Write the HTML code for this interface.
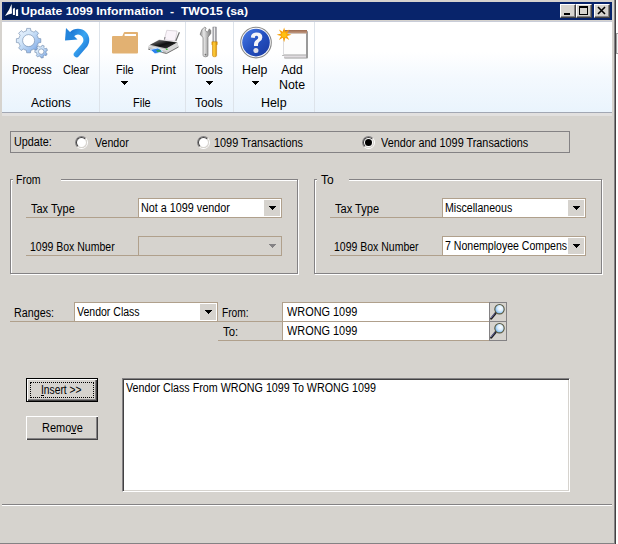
<!DOCTYPE html>
<html><head><meta charset="utf-8">
<style>
*{box-sizing:border-box}
html,body{margin:0;padding:0}
body{width:618px;height:544px;overflow:hidden;background:#fff;position:relative;font-family:"Liberation Sans",sans-serif;font-size:11px;color:#000}
.a{position:absolute}
#win{left:0;top:0;width:616px;height:544px;background:#d6d3ce;border-right:1px solid #424142}
#winr{left:614px;top:0;width:1px;height:544px;background:#848284}
#winb{left:0;top:543px;width:615px;height:1px;background:#848284}
#title{left:2px;top:2px;width:610px;height:18px;background:#08246b}
#logo{left:4px;top:3px;width:16px;height:16px;background:#011c52}
#ttxt{left:21px;top:4px;color:#fff;font-weight:bold;font-size:12px;line-height:14px;white-space:pre}
.tb{top:4px;width:16px;height:14px;background:#d6d3ce;border-top:1px solid #fff;border-left:1px solid #fff;border-right:1px solid #424142;border-bottom:1px solid #424142;box-shadow:inset -1px -1px 0 #848284}
#ribtop{left:2px;top:20px;width:610px;height:1px;background:#d6d3ce}
#ribline{left:2px;top:21px;width:610px;height:1px;background:#c8ccd8}
#ribbon{left:2px;top:22px;width:610px;height:90px;background:linear-gradient(#ffffff 0px,#ffffff 30px,#f4f9fe 55px,#eaf4fd 89px)}
#ribbot{left:2px;top:112px;width:610px;height:1px;background:#a2a7b3}
#ribbot2{left:2px;top:113px;width:610px;height:3px;background:#e2e0df}
.sep{top:22px;width:1px;height:90px;background:#dde3ea}
.rl{font-size:12px;line-height:14px;white-space:nowrap;color:#000}
.arr{width:0;height:0;border-left:3.5px solid transparent;border-right:3.5px solid transparent;border-top:4px solid #000}
.grp{border:1px solid #848284;box-shadow:1px 1px 0 #fff, inset 1px 1px 0 #fff}
.ul{height:1px;background:#b0a08c}
.cb{background:#fff;border:1px solid #b0a08c}
.cbb{background:#d6d3ce}
.cbarr{width:0;height:0;border-left:3.5px solid transparent;border-right:3.5px solid transparent;border-top:4px solid #000}
.lbl{line-height:13px;white-space:nowrap}
.radio{width:13px;height:13px;border-radius:50%;border:1px solid;border-color:#848284 #fff #fff #848284}.radio i{position:absolute;left:0;top:0;width:11px;height:11px;border-radius:50%;background:#fff;border:1px solid;border-color:#424142 #d6d3ce #d6d3ce #424142}
</style></head><body>
<svg width="0" height="0" style="position:absolute"><filter id="crisp" x="-5%" y="-20%" width="110%" height="140%"><feComponentTransfer><feFuncA type="discrete" tableValues="0 1 1"/></feComponentTransfer></filter></svg>
<div id="win" class="a"></div>
<div id="winr" class="a"></div>
<div id="winb" class="a"></div>
<div class="a" style="left:616px;top:33px;width:4px;height:21px;border:1px solid #a0a0a0;background:#f4f4f4"></div>
<div id="title" class="a"></div>
<div id="logo" class="a"></div>
<svg class="a" style="left:0;top:0" width="22" height="20" viewBox="0 0 22 20">
<path d="M5 16 Q9.5 10 11.6 4 L12 13.4 Q8 14 5 16 Z" fill="#fff"/>
<path d="M12.9 8.8 L14.9 7.8 L14.9 15.1 L12.9 15.1 Z" fill="#fff"/>
<path d="M15.9 9.8 L18.1 8.9 L18.1 15.9 L15.9 15.9 Z" fill="#fff"/>
</svg>
<div class="a tb" style="left:560px"></div>
<div class="a tb" style="left:576px"></div>
<div class="a tb" style="left:594px"></div>
<div class="a" style="left:564px;top:13px;width:6px;height:2px;background:#000"></div>
<div class="a" style="left:579px;top:6px;width:9px;height:9px;border:1px solid #000;border-top-width:2px"></div>
<svg class="a" style="left:597px;top:6px" width="10" height="9" viewBox="0 0 10 9"><path d="M1 1 L8 8 M8 1 L1 8" stroke="#000" stroke-width="1.6"/></svg>

<div id="ribtop" class="a"></div>
<div id="ribline" class="a"></div>
<div id="ribbon" class="a"></div>
<div id="ribbot" class="a"></div>
<div id="ribbot2" class="a"></div>
<div class="a sep" style="left:99px"></div>
<div class="a sep" style="left:185px"></div>
<div class="a sep" style="left:233px"></div>
<div class="a sep" style="left:314px"></div>

<!-- icons -->
<svg class="a" style="left:0;top:0" width="618" height="120" viewBox="0 0 618 120">
<defs>
<linearGradient id="gg" x1="0" y1="0" x2="1" y2="1">
<stop offset="0" stop-color="#f0f6fe"/><stop offset="0.4" stop-color="#d0e4f8"/><stop offset="0.75" stop-color="#98bcec"/><stop offset="1" stop-color="#5080d0"/>
</linearGradient>
<linearGradient id="ag" x1="0" y1="0" x2="1" y2="1">
<stop offset="0" stop-color="#1f7ad6"/><stop offset="0.5" stop-color="#3aa6f2"/><stop offset="1" stop-color="#1c74d4"/>
</linearGradient>
<linearGradient id="hg" x1="0" y1="0" x2="1" y2="1">
<stop offset="0" stop-color="#4a7ce8"/><stop offset="0.5" stop-color="#2450c0"/><stop offset="1" stop-color="#1a3aa0"/>
</linearGradient>
<linearGradient id="pg" x1="0" y1="0" x2="0" y2="1">
<stop offset="0" stop-color="#9a6a50"/><stop offset="1" stop-color="#c8a088"/>
</linearGradient>
<linearGradient id="dk" x1="0" y1="0" x2="1" y2="1">
<stop offset="0" stop-color="#909090"/><stop offset="0.5" stop-color="#101010"/><stop offset="1" stop-color="#424142"/>
</linearGradient>
</defs>
<!-- gears -->
<path d="M24.8 31.4 L26.4 30.8 L26.7 28.4 L30.5 28.4 L30.8 30.8 L32.4 31.4 L34.0 32.2 L35.9 30.6 L38.6 33.3 L37.0 35.2 L37.8 36.8 L38.4 38.4 L40.8 38.7 L40.8 42.5 L38.4 42.8 L37.8 44.4 L37.0 46.0 L38.6 47.9 L35.9 50.6 L34.0 49.0 L32.4 49.8 L30.8 50.4 L30.5 52.8 L26.7 52.8 L26.4 50.4 L24.8 49.8 L23.2 49.0 L21.3 50.6 L18.6 47.9 L20.2 46.0 L19.4 44.4 L18.8 42.8 L16.4 42.5 L16.4 38.7 L18.8 38.4 L19.4 36.8 L20.2 35.2 L18.6 33.3 L21.3 30.6 L23.2 32.2 Z M28.6 34.6 A6 6 0 1 0 28.6 46.6 A6 6 0 1 0 28.6 34.6 Z" fill="url(#gg)" fill-rule="evenodd" stroke="#6a84a8" stroke-width="0.6"/>
<path d="M40.5 46.8 L41.4 46.7 L42.0 45.2 L44.2 45.9 L43.8 47.4 L44.5 48.0 L45.2 48.7 L46.6 48.2 L47.5 50.4 L46.1 51.0 L46.1 52.0 L45.9 52.9 L47.2 53.8 L46.1 55.7 L44.7 55.0 L44.0 55.7 L43.1 56.1 L43.3 57.7 L41.0 58.0 L40.7 56.5 L39.8 56.3 L38.9 55.9 L37.8 57.0 L36.1 55.4 L37.1 54.2 L36.6 53.4 L36.4 52.5 L34.8 52.3 L35.0 50.0 L36.6 50.0 L37.0 49.1 L37.5 48.4 L36.7 47.0 L38.6 45.8 L39.5 47.0 Z M41.2 48.9 A2.7 2.7 0 1 0 41.2 54.3 A2.7 2.7 0 1 0 41.2 48.9 Z" fill="url(#gg)" fill-rule="evenodd" stroke="#6a84a8" stroke-width="0.6"/>
<!-- undo arrow -->
<path d="M72.1 34.1 A8.3 8.3 0 1 1 83.9 45.9 L76.6 54.4" fill="none" stroke="url(#ag)" stroke-width="5.8" stroke-linecap="round"/>
<path d="M66 28 L65 40.5 L77.5 39.5 Z" fill="#2384dc"/>
<!-- folder -->
<path d="M112 37 Q112 36 113 36 L122.4 36 L124 32.3 Q124.2 32 125 32 L137 32 Q138 32 138 33 L138 52.5 Q138 53.5 137 53.5 L113 53.5 Q112 53.5 112 52.5 Z" fill="#e2b172"/>
<rect x="124.6" y="34" width="11.4" height="2" fill="#fff"/>
<!-- printer -->
<path d="M166.8 30.3 L177.1 31 L175.1 41.2 L164.2 39.8 Z" fill="#faf4fa" stroke="#c8c0c8" stroke-width="0.6"/>
<path d="M179.4 32.3 L175.8 41" stroke="#707070" stroke-width="1.2"/>
<path d="M164.5 39.5 L165 37" stroke="#848284" stroke-width="1"/>
<path d="M148.3 45.9 L159.2 39.6 L177.4 42.2 L178.5 47 L166.5 53.5 L148.3 49.2 Z" fill="#c4c4c4"/>
<path d="M150 44.7 L159.2 40 L177 42.6 L166.5 48.5 Z" fill="url(#dk)"/>
<path d="M166.5 48.5 L177.6 42.6 L178.5 47 L166.5 53.5 Z" fill="#d8d8d8"/>
<rect x="166" y="48.6" width="1.6" height="1.4" fill="#40c040"/>
<path d="M148.3 49.2 L166.5 53.5 L178.5 47" fill="none" stroke="#686868" stroke-width="0.9"/>
<path d="M148.3 46.2 L166.5 50.4" fill="none" stroke="#ffffff" stroke-width="0.6"/>
<path d="M150.3 49.6 L158 48 L163 51.5 L155 53.8 Z" fill="#2a80f0" stroke="#e0f0ff" stroke-width="0.8"/>
<path d="M156 50 L160 49.5 L161.5 51.5 L157.5 52.3 Z" fill="#30a060"/>
<!-- tools -->
<defs>
<linearGradient id="wr" x1="0" y1="0" x2="1" y2="0"><stop offset="0" stop-color="#909090"/><stop offset="0.35" stop-color="#e8e8e8"/><stop offset="1" stop-color="#787878"/></linearGradient>
<linearGradient id="sd" x1="0" y1="0" x2="1" y2="0"><stop offset="0" stop-color="#e89800"/><stop offset="0.4" stop-color="#ffd040"/><stop offset="1" stop-color="#d08800"/></linearGradient>
<linearGradient id="sh" x1="0" y1="0" x2="1" y2="0"><stop offset="0" stop-color="#808088"/><stop offset="0.45" stop-color="#f4f4f4"/><stop offset="1" stop-color="#707078"/></linearGradient>
</defs>
<path d="M200.1 34.5 L201.8 29.6 L204.8 27.1 L206.2 28.1 L205 30.2 L207.4 32.2 L209.4 28.8 L210.8 30.6 L210.8 33.4 L208 37.2 L208 55.2 Q208 56.8 205.5 56.8 Q203 56.8 203 55.2 L203 37.4 Z" fill="url(#wr)" stroke="#6a6a6a" stroke-width="0.6"/>
<circle cx="205.5" cy="54.6" r="0.9" fill="#707070"/>
<rect x="212.9" y="27" width="3.3" height="15" fill="url(#sh)" stroke="#6a6a70" stroke-width="0.4"/>
<path d="M211.9 41.8 L217.2 41.8 L217.2 44.6 L216.6 45.6 L216.6 55.6 Q216.6 56.8 214.55 56.8 Q212.5 56.8 212.5 55.6 L212.5 45.6 L211.9 44.6 Z" fill="url(#sd)" stroke="#c07800" stroke-width="0.5"/>
<!-- help -->
<circle cx="256" cy="42.6" r="15.3" fill="#fff" stroke="#8a8a8a" stroke-width="1.1"/>
<circle cx="256" cy="42.6" r="13.8" fill="url(#hg)"/>
<g transform="translate(256.5 43) scale(1.15) translate(-256.5 -43)">
<path d="M251.6 38.2 Q251.6 33.8 256.6 33.8 Q261.6 33.8 261.6 38 Q261.6 40.6 259 42 Q257.8 42.8 257.8 44.5 L257.8 45.6 L254.3 45.6 L254.3 44 Q254.3 41.5 256.6 40.2 Q258 39.4 258 38.2 Q258 36.8 256.4 36.8 Q255 36.8 255 38.6 Z" fill="#f4f4f8"/>
<circle cx="256" cy="49.6" r="2.2" fill="#e0e0e8"/>
</g>
<!-- add note -->
<rect x="284" y="31" width="24" height="27.6" rx="1" fill="#9a9a9a"/>
<rect x="283" y="30" width="24" height="3.6" fill="url(#pg)"/>
<rect x="283" y="33.6" width="23" height="21" fill="#fdfdfd"/>
<rect x="283" y="33.6" width="0.8" height="21" fill="#d4d4d8"/>
<rect x="283" y="54.6" width="23" height="1" fill="#c8c8c8"/>
<rect x="282" y="55.2" width="2" height="0.8" fill="#b0b0b0"/>
<rect x="284" y="55.6" width="22" height="2" fill="#e0dce0"/>
<path d="M284.1 27.4 L285.4 31.8 L289.3 29.6 L287.1 33.5 L291.5 34.8 L287.1 36.1 L289.3 40.0 L285.4 37.8 L284.1 42.2 L282.8 37.8 L278.9 40.0 L281.1 36.1 L276.7 34.8 L281.1 33.5 L278.9 29.6 L282.8 31.8 Z" fill="#f8a008"/>
<circle cx="284.1" cy="34.8" r="2.6" fill="#ffc010"/>
</svg>

<!-- ribbon labels -->
<svg class="a" style="left:121px;top:81px" width="7" height="4" shape-rendering="crispEdges"><path d="M0 0h7v1h-1v1h-1v1h-1v1h-1v-1h-1v-1h-1v-1h-1z" fill="#000"/></svg>
<svg class="a" style="left:206px;top:81px" width="7" height="4" shape-rendering="crispEdges"><path d="M0 0h7v1h-1v1h-1v1h-1v1h-1v-1h-1v-1h-1v-1h-1z" fill="#000"/></svg>
<svg class="a" style="left:252px;top:81px" width="7" height="4" shape-rendering="crispEdges"><path d="M0 0h7v1h-1v1h-1v1h-1v1h-1v-1h-1v-1h-1v-1h-1z" fill="#000"/></svg>

<!-- Update box -->
<div class="a" style="left:10px;top:131px;width:560px;height:22px;border:1px solid #848284"></div>
<div class="a radio" style="left:75px;top:136px"><i></i></div>
<div class="a radio" style="left:197px;top:136px"><i></i></div>
<div class="a radio" style="left:362px;top:136px"><i></i></div>
<div class="a" style="left:365px;top:139px;width:7px;height:7px;background:#000;border-radius:50%"></div>

<!-- From group -->
<div class="a grp" style="left:10px;top:179px;width:288px;height:95px"></div>
<div class="a" style="left:13px;top:178px;width:48px;height:3px;background:#d6d3ce"></div>
<div class="a ul" style="left:26px;top:217px;width:112px"></div>
<div class="a cb" style="left:138px;top:198px;width:144px;height:20px"></div>
<div class="a cbb" style="left:264px;top:200px;width:16px;height:16px"></div>
<svg class="a" style="left:269px;top:206px" width="7" height="4" shape-rendering="crispEdges"><path d="M0 0h7v1h-1v1h-1v1h-1v1h-1v-1h-1v-1h-1v-1h-1z" fill="#000"/></svg>
<div class="a ul" style="left:26px;top:255px;width:112px"></div>
<div class="a" style="left:138px;top:236px;width:144px;height:20px;border:1px solid #b0a08c"></div>
<svg class="a" style="left:269px;top:244px" width="7" height="4" shape-rendering="crispEdges"><path d="M0 0h7v1h-1v1h-1v1h-1v1h-1v-1h-1v-1h-1v-1h-1z" fill="#848284"/></svg>

<!-- To group -->
<div class="a grp" style="left:314px;top:179px;width:288px;height:95px"></div>
<div class="a" style="left:317px;top:178px;width:32px;height:3px;background:#d6d3ce"></div>
<div class="a ul" style="left:330px;top:217px;width:112px"></div>
<div class="a cb" style="left:442px;top:198px;width:144px;height:20px"></div>
<div class="a cbb" style="left:568px;top:200px;width:16px;height:16px"></div>
<svg class="a" style="left:573px;top:206px" width="7" height="4" shape-rendering="crispEdges"><path d="M0 0h7v1h-1v1h-1v1h-1v1h-1v-1h-1v-1h-1v-1h-1z" fill="#000"/></svg>
<div class="a ul" style="left:330px;top:255px;width:112px"></div>
<div class="a cb" style="left:442px;top:236px;width:144px;height:20px"></div>
<div class="a cbb" style="left:568px;top:238px;width:16px;height:16px"></div>
<svg class="a" style="left:573px;top:244px" width="7" height="4" shape-rendering="crispEdges"><path d="M0 0h7v1h-1v1h-1v1h-1v1h-1v-1h-1v-1h-1v-1h-1z" fill="#000"/></svg>

<!-- Ranges -->
<div class="a ul" style="left:10px;top:321px;width:272px"></div>
<div class="a cb" style="left:74px;top:302px;width:144px;height:20px"></div>
<div class="a cbb" style="left:200px;top:304px;width:16px;height:16px"></div>
<svg class="a" style="left:205px;top:310px" width="7" height="4" shape-rendering="crispEdges"><path d="M0 0h7v1h-1v1h-1v1h-1v1h-1v-1h-1v-1h-1v-1h-1z" fill="#000"/></svg>
<div class="a ul" style="left:218px;top:340px;width:64px"></div>
<div class="a cb" style="left:282px;top:302px;width:208px;height:20px"></div>
<div class="a cb" style="left:282px;top:321px;width:208px;height:20px"></div>
<div class="a" style="left:489px;top:302px;width:18px;height:20px;border:1px solid #848284;background:#d6d3ce"></div>
<div class="a" style="left:489px;top:321px;width:18px;height:20px;border:1px solid #848284;background:#d6d3ce"></div>
<svg class="a" style="left:488px;top:301px" width="20" height="21" viewBox="488 301 20 21">
<defs><radialGradient id="lg0" cx="0.6" cy="0.4" r="0.6"><stop offset="0" stop-color="#fff"/><stop offset="0.5" stop-color="#d8ecfc"/><stop offset="1" stop-color="#78b8f0"/></radialGradient></defs>
<path d="M495.6 313.2 L491.2 318.6" stroke="#202020" stroke-width="2.2" stroke-linecap="round"/>
<path d="M494.8 313.4 L491 318" stroke="#8080d0" stroke-width="0.8"/>
<circle cx="499.5" cy="309.2" r="4.7" fill="url(#lg0)" stroke="#585840" stroke-width="1.1"/>
</svg>
<svg class="a" style="left:488px;top:320px" width="20" height="21" viewBox="488 301 20 21">
<defs><radialGradient id="lg19" cx="0.6" cy="0.4" r="0.6"><stop offset="0" stop-color="#fff"/><stop offset="0.5" stop-color="#d8ecfc"/><stop offset="1" stop-color="#78b8f0"/></radialGradient></defs>
<path d="M495.6 313.2 L491.2 318.6" stroke="#202020" stroke-width="2.2" stroke-linecap="round"/>
<path d="M494.8 313.4 L491 318" stroke="#8080d0" stroke-width="0.8"/>
<circle cx="499.5" cy="309.2" r="4.7" fill="url(#lg19)" stroke="#585840" stroke-width="1.1"/>
</svg>

<!-- Buttons -->
<div class="a" style="left:26px;top:378px;width:72px;height:24px;border:1px solid #000;background:#d6d3ce;box-shadow:inset 1px 1px 0 #fff, inset -1px -1px 0 #424142, inset -2px -2px 0 #848284"></div>
<div class="a" style="left:30px;top:382px;width:64px;height:16px;border:1px dotted #000"></div>
<div class="a" style="left:26px;top:416px;width:72px;height:24px;background:#d6d3ce;box-shadow:inset 1px 1px 0 #fff, inset -1px -1px 0 #424142, inset -2px -2px 0 #848284"></div>

<!-- List -->
<div class="a" style="left:122px;top:378px;width:448px;height:114px;background:#fff;border-top:1px solid #848284;border-left:1px solid #848284;border-right:1px solid #fff;border-bottom:1px solid #fff;box-shadow:inset 1px 1px 0 #424142, inset -1px -1px 0 #d6d3ce"></div>

<!-- bottom separator -->
<div class="a" style="left:2px;top:504px;width:610px;height:1px;background:#848284"></div>
<div class="a" style="left:2px;top:505px;width:610px;height:1px;background:#fff"></div>
<div class="a" style="left:41px;top:395px;width:3px;height:1px;background:#000"></div>
<div class="a" style="left:71px;top:433px;width:5px;height:1px;background:#000"></div>
<div class="a" style="left:20.89px;top:4px;font-size:11px;line-height:14px;font-weight:bold;color:#fff;white-space:nowrap;transform:scaleX(1.1084);transform-origin:0 0;">Update 1099 Information&nbsp;&nbsp;-&nbsp;&nbsp;TWO15 (sa)</div>
<div class="a" style="left:11.79px;top:63px;font-size:12px;line-height:15px;font-weight:normal;color:#000;white-space:nowrap;transform:scaleX(0.9143);transform-origin:0 0;">Process</div>
<div class="a" style="left:62.99px;top:63px;font-size:12px;line-height:15px;font-weight:normal;color:#000;white-space:nowrap;transform:scaleX(0.9143);transform-origin:0 0;">Clear</div>
<div class="a" style="left:31.00px;top:96px;font-size:12px;line-height:15px;font-weight:normal;color:#000;white-space:nowrap;transform:scaleX(1.0128);transform-origin:0 0;">Actions</div>
<div class="a" style="left:115.78px;top:63px;font-size:12px;line-height:15px;font-weight:normal;color:#000;white-space:nowrap;transform:scaleX(0.9167);transform-origin:0 0;">File</div>
<div class="a" style="left:150.79px;top:63px;font-size:12px;line-height:15px;font-weight:normal;color:#000;white-space:nowrap;transform:scaleX(1.0083);transform-origin:0 0;">Print</div>
<div class="a" style="left:132.78px;top:96px;font-size:12px;line-height:15px;font-weight:normal;color:#000;white-space:nowrap;transform:scaleX(0.9167);transform-origin:0 0;">File</div>
<div class="a" style="left:195.20px;top:63px;font-size:12px;line-height:15px;font-weight:normal;color:#000;white-space:nowrap;transform:scaleX(0.9929);transform-origin:0 0;">Tools</div>
<div class="a" style="left:195.20px;top:96px;font-size:12px;line-height:15px;font-weight:normal;color:#000;white-space:nowrap;transform:scaleX(0.9929);transform-origin:0 0;">Tools</div>
<div class="a" style="left:242.37px;top:63px;font-size:12px;line-height:15px;font-weight:normal;color:#000;white-space:nowrap;transform:scaleX(1.0261);transform-origin:0 0;">Help</div>
<div class="a" style="left:281.30px;top:63px;font-size:12px;line-height:15px;font-weight:normal;color:#000;white-space:nowrap;">Add</div>
<div class="a" style="left:278.67px;top:78px;font-size:12px;line-height:15px;font-weight:normal;color:#000;white-space:nowrap;transform:scaleX(1.0292);transform-origin:0 0;">Note</div>
<div class="a" style="left:260.57px;top:96px;font-size:12px;line-height:15px;font-weight:normal;color:#000;white-space:nowrap;transform:scaleX(1.0348);transform-origin:0 0;">Help</div>
<div class="a" style="left:14.10px;top:135px;font-size:12px;line-height:15px;font-weight:normal;color:#000;white-space:nowrap;transform:scaleX(0.9000);transform-origin:0 0;">Update:</div>
<div class="a" style="left:94.50px;top:136px;font-size:12px;line-height:15px;font-weight:normal;color:#000;white-space:nowrap;transform:scaleX(0.8868);transform-origin:0 0;">Vendor</div>
<div class="a" style="left:214.09px;top:136px;font-size:12px;line-height:15px;font-weight:normal;color:#000;white-space:nowrap;transform:scaleX(0.9072);transform-origin:0 0;">1099 Transactions</div>
<div class="a" style="left:381.00px;top:136px;font-size:12px;line-height:15px;font-weight:normal;color:#000;white-space:nowrap;transform:scaleX(0.9043);transform-origin:0 0;">Vendor and 1099 Transactions</div>
<div class="a" style="left:15.62px;top:173px;font-size:12px;line-height:15px;font-weight:normal;color:#000;white-space:nowrap;transform:scaleX(0.8769);transform-origin:0 0;">From</div>
<div class="a" style="left:31.00px;top:202px;font-size:12px;line-height:15px;font-weight:normal;color:#000;white-space:nowrap;transform:scaleX(0.9167);transform-origin:0 0;">Tax Type</div>
<div class="a" style="left:140.70px;top:201px;font-size:12px;line-height:15px;font-weight:normal;color:#000;white-space:nowrap;transform:scaleX(0.9000);transform-origin:0 0;">Not a 1099 vendor</div>
<div class="a" style="left:30.12px;top:240px;font-size:12px;line-height:15px;font-weight:normal;color:#000;white-space:nowrap;transform:scaleX(0.8750);transform-origin:0 0;">1099 Box Number</div>
<div class="a" style="left:321.00px;top:173px;font-size:12px;line-height:15px;font-weight:normal;color:#000;white-space:nowrap;">To</div>
<div class="a" style="left:335.00px;top:202px;font-size:12px;line-height:15px;font-weight:normal;color:#000;white-space:nowrap;transform:scaleX(0.9208);transform-origin:0 0;">Tax Type</div>
<div class="a" style="left:444.82px;top:201px;font-size:12px;line-height:15px;font-weight:normal;color:#000;white-space:nowrap;transform:scaleX(0.8840);transform-origin:0 0;">Miscellaneous</div>
<div class="a" style="left:334.13px;top:240px;font-size:12px;line-height:15px;font-weight:normal;color:#000;white-space:nowrap;transform:scaleX(0.8740);transform-origin:0 0;">1099 Box Number</div>
<div class="a" style="left:445.12px;top:239px;font-size:12px;line-height:15px;font-weight:normal;color:#000;white-space:nowrap;transform:scaleX(0.8796);transform-origin:0 0;">7 Nonemployee Compens</div>
<div class="a" style="left:13.60px;top:306px;font-size:12px;line-height:15px;font-weight:normal;color:#000;white-space:nowrap;transform:scaleX(0.8953);transform-origin:0 0;">Ranges:</div>
<div class="a" style="left:76.80px;top:305px;font-size:12px;line-height:15px;font-weight:normal;color:#000;white-space:nowrap;transform:scaleX(0.8775);transform-origin:0 0;">Vendor Class</div>
<div class="a" style="left:221.85px;top:306px;font-size:12px;line-height:15px;font-weight:normal;color:#000;white-space:nowrap;transform:scaleX(0.8483);transform-origin:0 0;">From:</div>
<div class="a" style="left:222.90px;top:325px;font-size:12px;line-height:15px;font-weight:normal;color:#000;white-space:nowrap;transform:scaleX(0.9467);transform-origin:0 0;">To:</div>
<div class="a" style="left:287.00px;top:305px;font-size:12px;line-height:15px;font-weight:normal;color:#000;white-space:nowrap;transform:scaleX(0.9091);transform-origin:0 0;">WRONG 1099</div>
<div class="a" style="left:287.00px;top:324px;font-size:12px;line-height:15px;font-weight:normal;color:#000;white-space:nowrap;transform:scaleX(0.9091);transform-origin:0 0;">WRONG 1099</div>
<div class="a" style="left:40.54px;top:383px;font-size:12px;line-height:15px;font-weight:normal;color:#000;white-space:nowrap;transform:scaleX(0.8565);transform-origin:0 0;">Insert &gt;&gt;</div>
<div class="a" style="left:41.78px;top:421px;font-size:12px;line-height:15px;font-weight:normal;color:#000;white-space:nowrap;transform:scaleX(0.9163);transform-origin:0 0;">Remove</div>
<div class="a" style="left:126.00px;top:381px;font-size:12px;line-height:15px;font-weight:normal;color:#000;white-space:nowrap;transform:scaleX(0.8929);transform-origin:0 0;">Vendor Class From WRONG 1099 To WRONG 1099</div>
</body></html>
